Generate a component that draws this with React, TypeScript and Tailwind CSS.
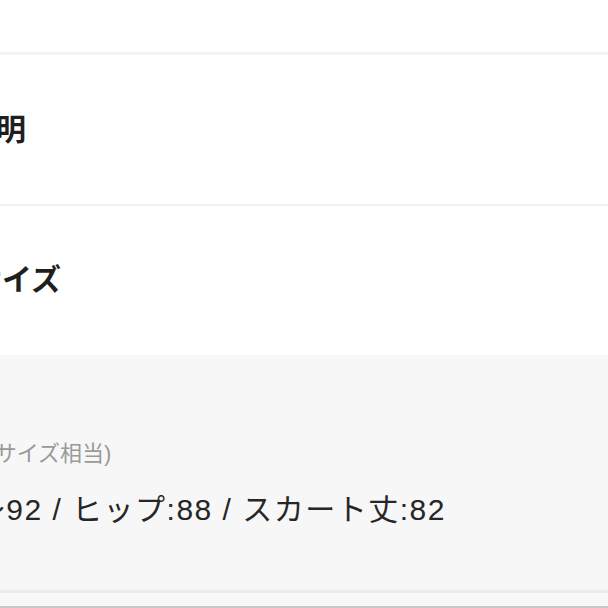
import React from "react";

const font = { fontFamily: '"Liberation Sans", "Noto Sans CJK JP", sans-serif' };

export default function App() {
  return (
    <div className="w-[608px] h-[608px] overflow-hidden bg-white" style={font}>
      <div className="h-[52px] bg-white" />
      <div className="h-[3px] bg-[#f4f4f4]" />
      <div className="h-[149px] flex items-center bg-white overflow-hidden">
        <div className="ml-[-94px] whitespace-nowrap text-[30px] font-bold text-[#1f1f1f] leading-none">商品説明</div>
      </div>
      <div className="h-[2px] bg-[#f0f0f0]" />
      <div className="h-[149px] flex items-center bg-white overflow-hidden pb-[2px]">
        <div className="ml-[-88px] whitespace-nowrap text-[30px] font-bold text-[#1f1f1f] leading-none">着用サイズ</div>
      </div>
      <div className="h-[235px] bg-[#f7f7f7] flex flex-col overflow-hidden pt-[86px]">
        <div className="ml-[-31px] whitespace-nowrap text-[22px] text-[#9a9a9a] leading-[26px]">(Mサイズ相当)</div>
        <div className="mt-[25px] ml-[-166px] whitespace-nowrap text-[30px] tracking-[1.5px] text-[#262626] leading-[36px]">バスト:84～92 / ヒップ:88 / スカート丈:82</div>
      </div>
      <div className="h-[3px] bg-[#ececec]" />
      <div className="h-[13px] bg-[#f8f8f8]" />
      <div className="h-[2px] bg-[#c8c8c8]" />
    </div>
  );
}
